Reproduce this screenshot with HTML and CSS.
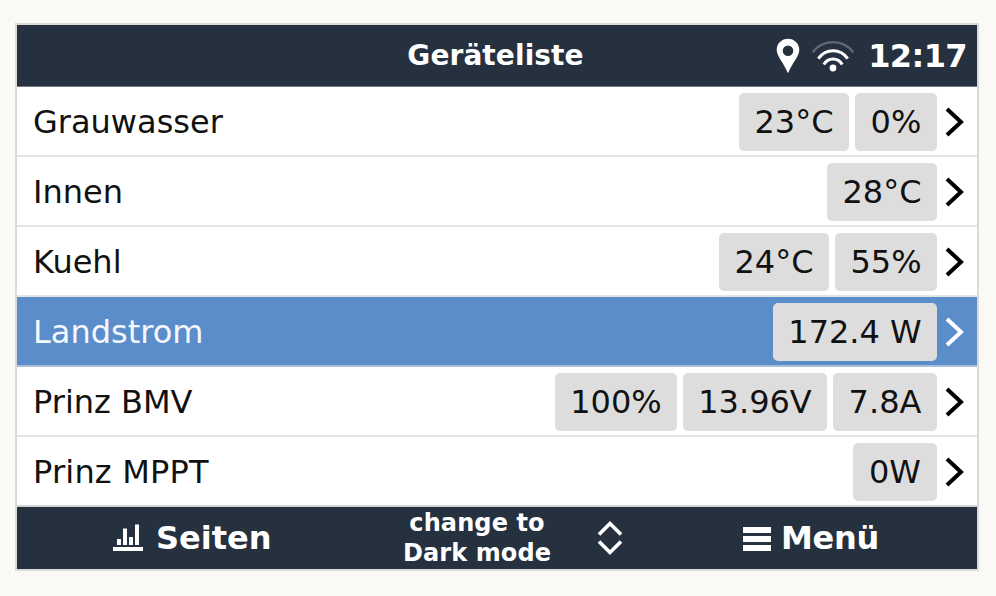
FILE: index.html
```html
<!DOCTYPE html>
<html lang="de">
<head>
<meta charset="utf-8">
<title>Geräteliste</title>
<link rel="stylesheet" href="styles.css">
</head>
<body>
<main class="screen">
  <header class="topbar">
    <h1 class="title">Geräteliste</h1>
    <div class="status">
      <svg class="pin" width="24" height="37" viewBox="0 0 24 37"><path fill="#fff" fill-rule="evenodd" d="M12 1.700C5.700 1.700 .7 6.600 .7 12.800C.7 19.500 7.500 25.500 12 36.300C16.500 25.500 23.300 19.500 23.300 12.800C23.300 6.600 18.300 1.700 12 1.700zM12 8.400a5.300 5.300 0 1 1 0 10.600a5.300 5.300 0 0 1 0-10.600z"/></svg>
      <svg class="wifi" width="44" height="33" viewBox="0 0 44 33"><g fill="none" stroke="#fff" stroke-width="3"><path stroke="#636c76" stroke-width="2.400" d="M1.700 13.200C12-.2 32-.2 42.300 13.200"/><path d="M7.300 19.600C14.500 9 29.500 9 36.700 19.600"/><path d="M12.800 25.500C17 18 27 18 31.200 25.500"/></g><circle cx="22" cy="29" r="3.400" fill="#fff"/></svg>
      <time class="clock">12:17</time>
    </div>
  </header>
  <section class="list">
    <div class="row"><span class="name">Grauwasser</span><span class="value w110">23°C</span><span class="value w82">0%</span><svg class="chevron" width="20" height="32" viewBox="0 0 20 32"><path d="M2 3L16 16L2 29"/></svg></div>
    <div class="row"><span class="name">Innen</span><span class="value w110">28°C</span><svg class="chevron" width="20" height="32" viewBox="0 0 20 32"><path d="M2 3L16 16L2 29"/></svg></div>
    <div class="row"><span class="name">Kuehl</span><span class="value w110">24°C</span><span class="value w102">55%</span><svg class="chevron" width="20" height="32" viewBox="0 0 20 32"><path d="M2 3L16 16L2 29"/></svg></div>
    <div class="row selected"><span class="name">Landstrom</span><span class="value w164">172.4 W</span><svg class="chevron" width="20" height="32" viewBox="0 0 20 32"><path d="M2 3L16 16L2 29"/></svg></div>
    <div class="row"><span class="name">Prinz BMV</span><span class="value w122">100%</span><span class="value w144">13.96V</span><span class="value w104">7.8A</span><svg class="chevron" width="20" height="32" viewBox="0 0 20 32"><path d="M2 3L16 16L2 29"/></svg></div>
    <div class="row"><span class="name spaced">Prinz MPPT</span><span class="value w84">0W</span><svg class="chevron" width="20" height="32" viewBox="0 0 20 32"><path d="M2 3L16 16L2 29"/></svg></div>
  </section>
  <footer class="bottombar">
    <div class="pages">
      <svg width="32" height="28" viewBox="0 0 32 28"><path fill="#fff" d="M5 15h4v6H5zM11 4.500h4V21h-4zM17 13h4v8h-4zM23 .5h4V21h-4zM1 23h30v4H1z"/></svg>
      <span>Seiten</span>
    </div>
    <div class="mode">change to<br>Dark mode</div>
    <svg class="sort" width="28" height="36" viewBox="0 0 28 36"><path fill="none" stroke="#fff" stroke-width="3.600" d="M3 14.500L14 3.500L25 14.500M3 21.500L14 32.500L25 21.500"/></svg>
    <div class="menu">
      <svg width="30" height="28" viewBox="0 0 30 28"><path fill="#fff" d="M1 3h28v6H1zM1 12h28v6H1zM1 21h28v6H1z"/></svg>
      <span>Menü</span>
    </div>
  </footer>
</main>
</body>
</html>
```
FILE: styles.css
```css
* { box-sizing: border-box; }
body {
  margin: 0;
  padding: 23px 0 0 15px;
  height: 596px;
  background: #faf9f5;
  font-family: "DejaVu Sans", sans-serif;
}
.screen {
  width: 964px;
  height: 548px;
  border: 2px solid #dbdad6;
  background: #fff;
}
.topbar {
  display: grid;
  grid-template-columns: 1fr auto 1fr;
  align-items: center;
  height: 62px;
  background: #26313f;
  border-bottom: 1px solid #727a85;
  color: #fff;
}
.title {
  grid-column: 2;
  margin: 0 3px 0 0;
  font-size: 28px;
  line-height: 60px;
  letter-spacing: 0.1px;
}
.status {
  display: flex;
  align-items: center;
  justify-content: flex-end;
  padding-right: 10px;
}
.pin { margin-right: 11px; }
.wifi { margin-right: 12px; }
.clock {
  width: 100px;
  font-size: 32px;
  font-weight: bold;
  line-height: 60px;
  letter-spacing: -0.6px;
  text-align: right;
}
.row {
  display: flex;
  align-items: center;
  gap: 6px;
  height: 70px;
  padding: 2px 11px 0 16px;
  border-bottom: 2px solid #e4e4e4;
  font-size: 32px;
  color: #111;
}
.row:last-child { border-bottom-color: #d2d2d2; }
.selected {
  background: #5a8dca;
  border-bottom-color: #a9bfd9;
  color: #f4f8fc;
}
.name { flex: 1; }
.spaced { letter-spacing: 0.2px; }
.value {
  height: 58px;
  border-radius: 5px;
  background: #ddd;
  color: #111;
  line-height: 58px;
  text-align: center;
  white-space: nowrap;
}
.w82 { width: 82px; }
.w84 { width: 84px; }
.w102 { width: 102px; }
.w104 { width: 104px; }
.w110 { width: 110px; }
.w122 { width: 122px; }
.w144 { width: 144px; }
.w164 { width: 164px; }
.chevron {
  margin: 0 1px 0 2px;
  fill: none;
  stroke: #000;
  stroke-width: 4;
}
.selected .chevron { stroke: #fff; }
.bottombar {
  display: flex;
  align-items: center;
  height: 62px;
  padding-left: 95px;
  background: #26313f;
  color: #fff;
  font-weight: bold;
}
.pages, .menu {
  display: flex;
  align-items: center;
  font-size: 32px;
}
.pages { width: 279px; gap: 12px; }
.mode {
  width: 172px;
  font-size: 24px;
  line-height: 30px;
  letter-spacing: 0.1px;
  text-align: center;
}
.sort { margin: 0 118px 0 33px; }
.menu {
  gap: 9px;
  letter-spacing: -0.3px;
}
```
